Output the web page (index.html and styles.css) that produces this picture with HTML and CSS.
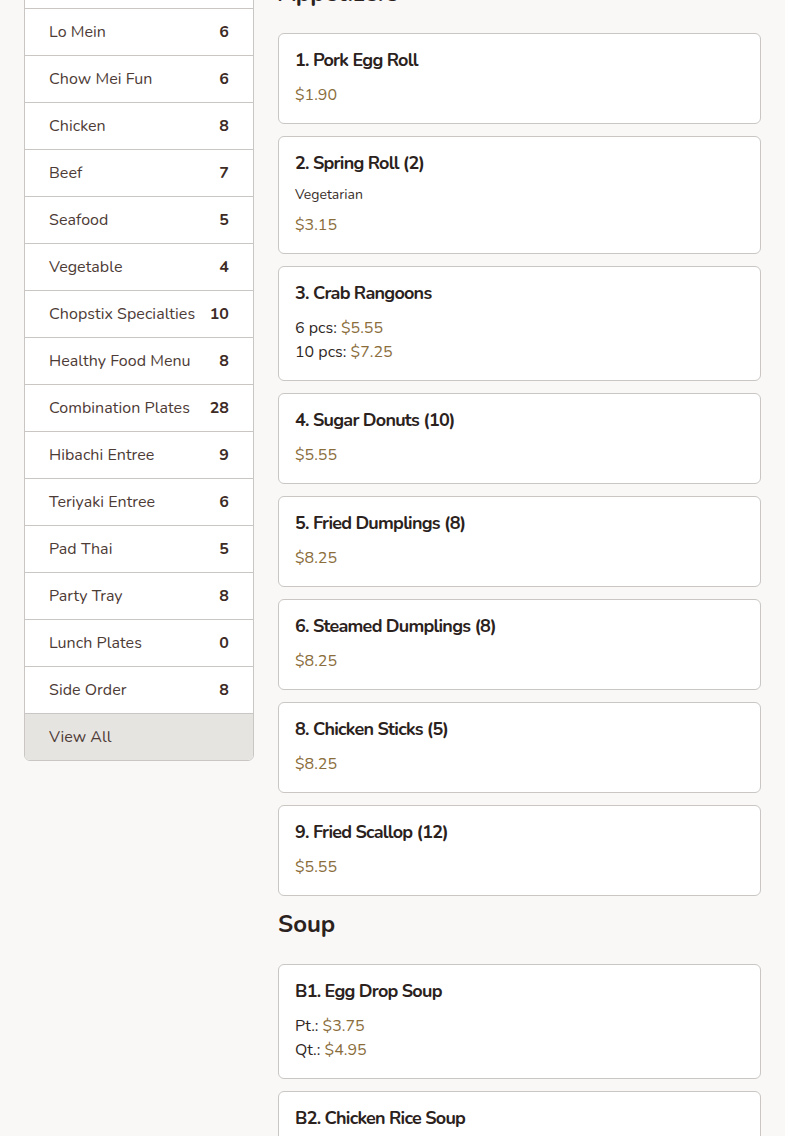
FILE: index.html
```html
<!DOCTYPE html>
<html lang="en">
<head>
<meta charset="utf-8">
<title>Menu</title>
<link rel="stylesheet" href="styles.css">
</head>
<body>
<div class="page">
  <nav class="sidebar">
    <a class="cat"><span class="cat-name">Fried Rice</span><span class="cat-count">7</span></a>
    <a class="cat"><span class="cat-name">Lo Mein</span><span class="cat-count">6</span></a>
    <a class="cat"><span class="cat-name">Chow Mei Fun</span><span class="cat-count">6</span></a>
    <a class="cat"><span class="cat-name">Chicken</span><span class="cat-count">8</span></a>
    <a class="cat"><span class="cat-name">Beef</span><span class="cat-count">7</span></a>
    <a class="cat"><span class="cat-name">Seafood</span><span class="cat-count">5</span></a>
    <a class="cat"><span class="cat-name">Vegetable</span><span class="cat-count">4</span></a>
    <a class="cat"><span class="cat-name">Chopstix Specialties</span><span class="cat-count">10</span></a>
    <a class="cat"><span class="cat-name">Healthy Food Menu</span><span class="cat-count">8</span></a>
    <a class="cat"><span class="cat-name">Combination Plates</span><span class="cat-count">28</span></a>
    <a class="cat"><span class="cat-name">Hibachi Entree</span><span class="cat-count">9</span></a>
    <a class="cat"><span class="cat-name">Teriyaki Entree</span><span class="cat-count">6</span></a>
    <a class="cat"><span class="cat-name">Pad Thai</span><span class="cat-count">5</span></a>
    <a class="cat"><span class="cat-name">Party Tray</span><span class="cat-count">8</span></a>
    <a class="cat"><span class="cat-name">Lunch Plates</span><span class="cat-count">0</span></a>
    <a class="cat"><span class="cat-name">Side Order</span><span class="cat-count">8</span></a>
    <a class="cat cat-all"><span class="cat-name">View All</span></a>
  </nav>

  <main class="menu">
    <section class="section">
      <h2 class="section-title">Appetizers</h2>
      <div class="items">
        <div class="item">
          <h3 class="item-title">1. Pork Egg Roll</h3>
          <div class="price-line"><span class="price">$1.90</span></div>
        </div>
        <div class="item">
          <h3 class="item-title">2. Spring Roll (2)</h3>
          <p class="item-desc">Vegetarian</p>
          <div class="price-line"><span class="price">$3.15</span></div>
        </div>
        <div class="item">
          <h3 class="item-title">3. Crab Rangoons</h3>
          <div class="price-line">6 pcs: <span class="price">$5.55</span></div>
          <div class="price-line">10 pcs: <span class="price">$7.25</span></div>
        </div>
        <div class="item">
          <h3 class="item-title">4. Sugar Donuts (10)</h3>
          <div class="price-line"><span class="price">$5.55</span></div>
        </div>
        <div class="item">
          <h3 class="item-title">5. Fried Dumplings (8)</h3>
          <div class="price-line"><span class="price">$8.25</span></div>
        </div>
        <div class="item">
          <h3 class="item-title">6. Steamed Dumplings (8)</h3>
          <div class="price-line"><span class="price">$8.25</span></div>
        </div>
        <div class="item">
          <h3 class="item-title">8. Chicken Sticks (5)</h3>
          <div class="price-line"><span class="price">$8.25</span></div>
        </div>
        <div class="item">
          <h3 class="item-title">9. Fried Scallop (12)</h3>
          <div class="price-line"><span class="price">$5.55</span></div>
        </div>
      </div>
    </section>

    <section class="section">
      <h2 class="section-title">Soup</h2>
      <div class="items">
        <div class="item">
          <h3 class="item-title">B1. Egg Drop Soup</h3>
          <div class="price-line">Pt.: <span class="price">$3.75</span></div>
          <div class="price-line">Qt.: <span class="price">$4.95</span></div>
        </div>
        <div class="item">
          <h3 class="item-title">B2. Chicken Rice Soup</h3>
          <div class="price-line">Pt.: <span class="price">$3.75</span></div>
          <div class="price-line">Qt.: <span class="price">$4.95</span></div>
        </div>
      </div>
    </section>
  </main>
</div>
</body>
</html>
```

FILE: styles.css
```css
* { box-sizing: border-box; }

html, body {
  margin: 0;
  padding: 0;
}

body {
  background: #f9f8f6;
  font-family: "Nunito", "Lato", "Noto Sans", sans-serif;
  color: #2b2220;
  overflow: hidden;
}

.page {
  display: flex;
  align-items: flex-start;
  gap: 24px;
  padding: 0 24px;
  margin-top: -39px;
}

/* Sidebar */
.sidebar {
  flex: 0 0 230px;
  display: flex;
  flex-direction: column;
  background: #ffffff;
  border: 1px solid #c9c6c3;
  border-radius: 6px;
  overflow: hidden;
}

.cat {
  display: flex;
  align-items: center;
  justify-content: space-between;
  height: 47px;
  padding: 0 24px 0 24px;
  border-bottom: 1px solid #c9c6c3;
  font-size: 16px;
  letter-spacing: 0.05px;
  color: #4d3b36;
}

.cat:last-child { border-bottom: 0; height: 46px; }

.cat-count {
  font-weight: 700;
  color: #3d2b26;
}

.cat-all {
  background: #e6e4e1;
}

/* Main menu */
.menu {
  flex: 1 1 auto;
  min-width: 0;
  padding-top: 4px;
}

.section + .section { margin-top: 12px; }

.section-title {
  margin: 12px 0 24px;
  font-size: 24px;
  line-height: 32px;
  font-weight: 700;
  color: #2b2220;
}

.items {
  display: flex;
  flex-direction: column;
  gap: 12px;
}

.item {
  background: #ffffff;
  border: 1px solid #c9c6c3;
  border-radius: 6px;
  padding: 16px;
}

.item-title {
  margin: 0 0 13px;
  font-size: 18px;
  line-height: 20px;
  font-weight: 700;
  letter-spacing: -0.75px;
  color: #2b2220;
}

.item-desc {
  margin: -1px 0 8px;
  font-size: 14px;
  line-height: 20px;
  color: #3a2f2b;
}

.price-line {
  font-size: 16px;
  line-height: 24px;
  color: #2f2724;
}

.price {
  color: #8a6d3b;
}
```
